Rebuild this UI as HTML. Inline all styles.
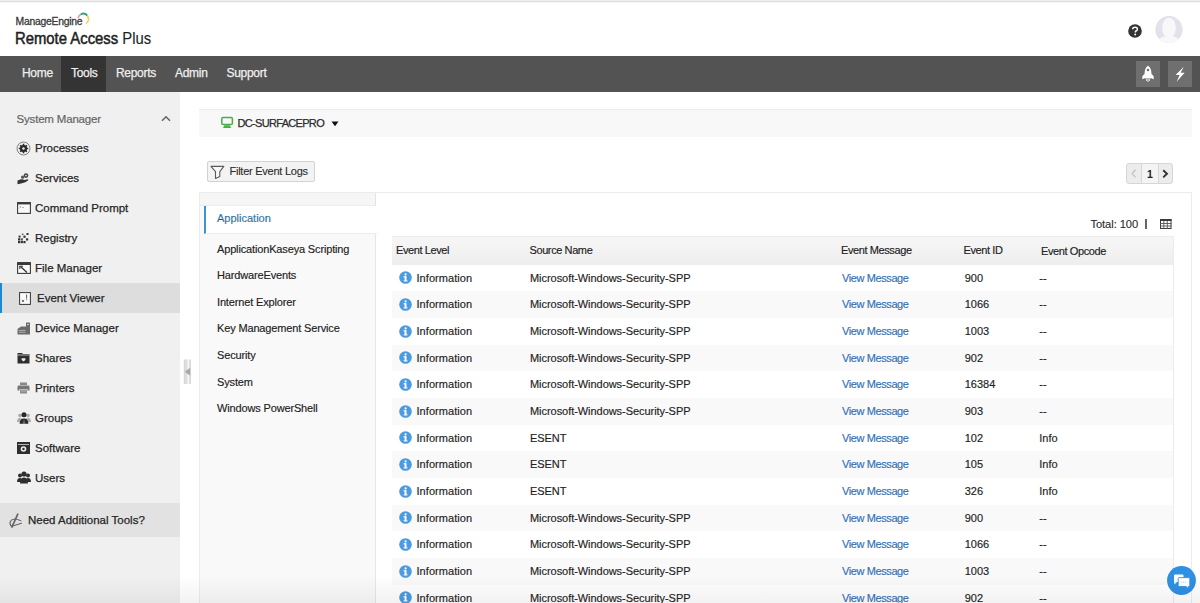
<!DOCTYPE html>
<html><head><meta charset="utf-8">
<style>
*{margin:0;padding:0;box-sizing:border-box}
html,body{width:1200px;height:603px;overflow:hidden;background:#fff;font-family:"Liberation Sans",sans-serif;color:#333}
.abs{position:absolute}
svg{position:absolute;display:block}
#topline{left:0;top:0;width:1200px;height:3px;background:linear-gradient(#ededed 0,#ededed 1px,#dcdcdc 1px,#dcdcdc 2px,#f8f8f8 2px)}
#nav{left:0;top:56px;width:1200px;height:36px;background:#535353}
.nv{position:absolute;top:0;height:36px;line-height:35px;font-size:12px;color:#f0f0f0;letter-spacing:-0.3px;-webkit-text-stroke:0.25px #eee}
#side{left:0;top:92px;width:180px;height:511px;background:#f0f0f0}
.si{position:absolute;left:35px;font-size:11.5px;color:#262626;white-space:nowrap;line-height:14px;-webkit-text-stroke:0.25px #262626}
.lt{position:absolute;left:217px;font-size:11px;color:#222;white-space:nowrap;line-height:14px;letter-spacing:-0.15px;-webkit-text-stroke:0.15px #222}
.row{position:absolute;left:392px;width:781px;height:26.67px}
.cell{position:absolute;font-size:11px;color:#222;white-space:nowrap;line-height:14px;top:6px;-webkit-text-stroke:0.15px #222}
.hd{position:absolute;font-size:11px;color:#222;-webkit-text-stroke:0.15px #222;white-space:nowrap;line-height:14px;top:242.7px;letter-spacing:-0.4px}
.link{color:#3170b6;-webkit-text-stroke:0.15px #3170b6;letter-spacing:-0.4px}
.info{left:6.9px;top:6.8px}
</style></head><body>
<div id="topline" class="abs"></div>
<!-- header -->
<div class="abs" style="left:15.5px;top:14.5px;font-size:10.4px;color:#3a3a3a;letter-spacing:-0.26px;-webkit-text-stroke:0.3px #3a3a3a;white-space:nowrap;line-height:13px">ManageEngine</div>
<svg style="left:72px;top:8px" width="24" height="20" viewBox="0 0 24 20"><g fill="none" stroke-width="1.8"><path d="M6.08 10.08 A5.3 5.3 0 0 1 8.65 6.41" stroke="#e8a0a8"/><path d="M8.65 6.41 A5.3 5.3 0 0 1 15.36 7.59" stroke="#3c9c88"/><path d="M15.36 7.59 A5.3 5.3 0 0 1 13.95 15.59" stroke="#ecd468"/></g></svg>
<div class="abs" style="left:14.5px;top:28.5px;font-size:16.5px;color:#222;white-space:nowrap;line-height:19px;-webkit-text-stroke:0.5px #222;transform:scaleX(0.9);transform-origin:0 0">Remote Access <span style="-webkit-text-stroke:0.1px #222">Plus</span></div>
<svg style="left:1128px;top:24px" width="14" height="14" viewBox="0 0 14 14"><circle cx="7" cy="7" r="6.8" fill="#333"/><path d="M4.6 5.3 Q4.7 3.2 7 3.2 Q9.4 3.2 9.4 5.2 Q9.4 6.4 8 7 Q7.3 7.4 7.3 8.4" stroke="#fff" stroke-width="1.5" fill="none"/><circle cx="7.2" cy="10.5" r="0.95" fill="#fff"/></svg>
<svg style="left:1155px;top:16px" width="28" height="28" viewBox="0 0 28 28"><defs><clipPath id="cc"><circle cx="14" cy="13.5" r="13.6"/></clipPath></defs><circle cx="14" cy="13.5" r="13.6" fill="#e2e2ea"/><g clip-path="url(#cc)" fill="#f8f8fb"><ellipse cx="14" cy="12" rx="6.8" ry="10.2"/><path d="M3 28 Q3.5 21.5 9.5 20.5 L18.5 20.5 Q24.5 21.5 25 28 Z"/><rect x="10" y="17" width="8" height="5"/></g></svg>
<!-- nav -->
<div id="nav" class="abs">
  <div class="nv" style="left:22px">Home</div>
  <div class="abs" style="left:61px;top:0;width:45px;height:36px;background:#343434"></div>
  <div class="nv" style="left:71px">Tools</div>
  <div class="nv" style="left:116px">Reports</div>
  <div class="nv" style="left:175px">Admin</div>
  <div class="nv" style="left:226.5px">Support</div>
  <div class="abs" style="left:1136px;top:5px;width:24px;height:26px;background:#6f6f6f"></div>
  <div class="abs" style="left:1168px;top:5px;width:24px;height:26px;background:#6f6f6f"></div>
</div>
<svg style="left:1136px;top:61px" width="24" height="26" viewBox="0 0 24 26"><path d="M12 4.8 Q15.4 7 15.4 12 L15.2 17.5 L8.8 17.5 L8.6 12 Q8.6 7 12 4.8 Z" fill="#fff"/><path d="M8.8 12.5 Q6.2 14.5 6.2 17 L6.5 18.3 L9 17 Z M15.2 12.5 Q17.8 14.5 17.8 17 L17.5 18.3 L15 17 Z" fill="#fff"/><circle cx="12" cy="9" r="1.25" fill="#6f6f6f"/><rect x="10.1" y="18" width="1" height="2" fill="#ddd"/><rect x="12.9" y="18" width="1" height="2" fill="#ddd"/><rect x="11.5" y="18" width="1" height="3" fill="#eee"/></svg>
<svg style="left:1168px;top:61px" width="24" height="26" viewBox="0 0 24 26"><path d="M15.8 5.8 L7.6 14 H11.6 L8.6 20.8 L16.6 11.8 H12.6 Z" fill="#fff"/></svg>
<!-- sidebar -->
<div id="side" class="abs">
  <div class="abs" style="left:16.5px;top:19.5px;font-size:11.5px;color:#666;letter-spacing:-0.18px;white-space:nowrap;line-height:14px;-webkit-text-stroke:0.2px #666">System Manager</div>
  <div class="abs" style="top:191px;left:0;width:180px;height:30px;background:#dddddd"></div>
  <div class="abs" style="top:191px;left:0;width:2px;height:30px;background:#1c8ad0"></div>
  <div class="si" style="top:49px">Processes</div>
  <div class="si" style="top:79px">Services</div>
  <div class="si" style="top:109px">Command Prompt</div>
  <div class="si" style="top:139px">Registry</div>
  <div class="si" style="top:169px">File Manager</div>
  <div class="si" style="top:199px;left:37px">Event Viewer</div>
  <div class="si" style="top:229px">Device Manager</div>
  <div class="si" style="top:259px">Shares</div>
  <div class="si" style="top:289px">Printers</div>
  <div class="si" style="top:319px">Groups</div>
  <div class="si" style="top:349px">Software</div>
  <div class="si" style="top:379px">Users</div>
  <div class="abs" style="top:410.5px;left:0;width:180px;height:34.5px;background:#e2e2e2"></div>
  <div class="si" style="top:421px;left:28px">Need Additional Tools?</div>
</div>
<svg style="left:161px;top:115px" width="10" height="7" viewBox="0 0 10 7"><path d="M1 5.8 L5 1.8 L9 5.8" stroke="#666" stroke-width="1.6" fill="none"/></svg>
<!-- sidebar icons -->
<svg style="left:16px;top:141px" width="15" height="15" viewBox="0 0 15 15"><circle cx="7.5" cy="7.5" r="6.5" stroke="#777" stroke-width="0.9" fill="none"/><circle cx="7.5" cy="7.5" r="3.6" fill="#2a2a2a"/><g stroke="#2a2a2a" stroke-width="1.6"><path d="M7.5 2.8 V12.2 M2.8 7.5 H12.2 M4.2 4.2 L10.8 10.8 M10.8 4.2 L4.2 10.8"/></g><circle cx="7.5" cy="7.5" r="1.2" fill="#f0f0f0"/></svg>
<svg style="left:17px;top:172px" width="13" height="13" viewBox="0 0 13 13"><path d="M0.5 8.5 L4 7.3 Q6 7 7.5 8 L10.5 7.2 Q12 7.5 11 8.6 Q8.5 10.8 5 11.3 L0.5 12.2 Z" fill="#333"/><circle cx="9" cy="3.6" r="2.3" fill="#444"/><circle cx="5.6" cy="5.2" r="1.6" fill="#555"/><circle cx="9" cy="3.6" r="0.8" fill="#f0f0f0"/></svg>
<svg style="left:16.5px;top:202px" width="14" height="12" viewBox="0 0 14 12"><rect x="0.6" y="0.6" width="12.8" height="10.8" fill="#fafafa" stroke="#3a3a3a" stroke-width="1.1"/><rect x="0.6" y="0.6" width="12.8" height="1.8" fill="#3a3a3a"/><path d="M2.5 4 L4 5 L2.5 6 M5 5.5 H7" stroke="#888" stroke-width="0.6" fill="none"/></svg>
<svg style="left:18px;top:233px" width="11" height="11" viewBox="0 0 11 11"><g fill="#333"><rect x="0" y="8" width="2.2" height="2.2"/><rect x="2.7" y="8" width="2.2" height="2.2"/><rect x="5.4" y="8" width="2.2" height="2.2"/><rect x="0" y="5.3" width="2.2" height="2.2"/><rect x="2.7" y="5.3" width="2.2" height="2.2" fill="#555"/><rect x="8" y="5.3" width="2.2" height="2.2"/><rect x="0.6" y="2.6" width="2" height="2"/><rect x="5.4" y="2.6" width="2.2" height="2.2"/><rect x="8.5" y="0" width="2" height="2"/><rect x="3.8" y="0.5" width="1.6" height="1.6" fill="#666"/></g></svg>
<svg style="left:16.5px;top:262px" width="14" height="12" viewBox="0 0 14 12"><rect x="0.6" y="0.6" width="12.8" height="10.8" fill="#fafafa" stroke="#3a3a3a" stroke-width="1.1"/><rect x="0.6" y="0.6" width="12.8" height="2.4" fill="#3a3a3a"/><path d="M3.5 4.5 L10 10.5" stroke="#333" stroke-width="1.3"/><path d="M2.5 4.2 H6 M2.8 4 V7" stroke="#333" stroke-width="1"/></svg>
<svg style="left:19px;top:292px" width="12" height="13" viewBox="0 0 12 13"><rect x="0.6" y="0.6" width="10.8" height="11.8" fill="#fafafa" stroke="#333" stroke-width="1"/><path d="M3 7.8 L5 10 M5 7.8 L3 10" stroke="#333" stroke-width="0.7"/><path d="M7.6 2.5 V6.5 M7.6 7.3 V8.2" stroke="#333" stroke-width="0.8"/></svg>
<svg style="left:17px;top:322px" width="14" height="13" viewBox="0 0 14 13"><path d="M9 0.5 H13 V12.5 H0.5 V7 L4 4.5 H9 Z" fill="#6a6a6a"/><path d="M1.5 8.5 H8.5 M2 10.3 H8.5" stroke="#ddd" stroke-width="0.6"/><circle cx="11" cy="2.5" r="0.8" fill="#ddd"/></svg>
<svg style="left:17px;top:352px" width="13" height="12" viewBox="0 0 13 12"><path d="M0.5 1 H5 L6 2 H12.5 V11.5 H0.5 Z" fill="#2e2e2e"/><path d="M0.5 3 H12.5" stroke="#f0f0f0" stroke-width="0.7"/><path d="M4.6 6.2 H8.4 V8 L6.5 9.6 L4.6 8 Z" fill="#e8e8e8"/></svg>
<svg style="left:17px;top:382px" width="13" height="12" viewBox="0 0 13 12"><path d="M3 0.5 H10 V3 H3 Z" fill="#888"/><path d="M1.5 3.5 Q0.5 3.5 0.5 5 V8.5 H2.5 V7 H10.5 V8.5 H12.5 V5 Q12.5 3.5 11.5 3.5 Z" fill="#777"/><rect x="3" y="7.5" width="7" height="4" fill="#8a8a8a"/><path d="M3.5 9 H9.5" stroke="#ddd" stroke-width="0.5"/></svg>
<svg style="left:16.5px;top:412px" width="14" height="12" viewBox="0 0 14 12"><g fill="#aaa"><circle cx="3" cy="3.5" r="1.8"/><circle cx="11" cy="3.5" r="1.8"/><path d="M0 9 Q0.5 6 3 6 Q5 6 5.5 8 L4 10 H0 Z"/><path d="M14 9 Q13.5 6 11 6 Q9 6 8.5 8 L10 10 H14 Z"/></g><circle cx="7" cy="2.8" r="2.5" fill="#2a2a2a"/><path d="M2.5 11.8 Q3 6.5 7 6.5 Q11 6.5 11.5 11.8 Z" fill="#2a2a2a"/><path d="M7 7 L6.3 11.8 H7.7 Z" fill="#aaa"/></svg>
<svg style="left:17px;top:442px" width="13" height="12" viewBox="0 0 13 12"><rect x="0" y="0" width="13" height="12" fill="#2e2e2e"/><rect x="1" y="2.2" width="11" height="0.7" fill="#f0f0f0"/><circle cx="6.5" cy="7" r="2.8" fill="#eee"/><circle cx="6.5" cy="7" r="1.2" fill="#2e2e2e"/></svg>
<svg style="left:16.5px;top:471px" width="14" height="13" viewBox="0 0 14 13"><g fill="#2e2e2e"><circle cx="3" cy="4.5" r="2"/><circle cx="11" cy="4.5" r="2"/><path d="M0 11 Q0 7 3 7 Q5 7 5.5 9 V11 Z"/><path d="M14 11 Q14 7 11 7 Q9 7 8.5 9 V11 Z"/><circle cx="7" cy="3" r="2.6"/><path d="M3 12.5 Q3 6.5 7 6.5 Q11 6.5 11 12.5 Z"/></g></svg>
<svg style="left:4px;top:508px" width="24" height="26" viewBox="0 0 24 26"><g fill="none" stroke="#666" stroke-linecap="round"><path d="M13.8 6.2 L8 18.8" stroke-width="1.7"/><path d="M8 19 Q5.2 16.5 6.3 13.5 Q7.5 11 10.5 11.3" stroke-width="1.1"/><path d="M11 10.6 L17 12.8" stroke-width="1"/><path d="M7.8 18.2 L17.5 15.2" stroke-width="1.1"/></g></svg>
<!-- collapse handle -->
<svg style="left:183px;top:359px" width="9" height="26" viewBox="0 0 9 26"><rect x="1" y="0.5" width="3.6" height="24.5" fill="#dcdcdc"/><rect x="5.8" y="0.5" width="2.3" height="24.5" fill="#dcdcdc"/><path d="M1.2 0.5 V25" stroke="#cfcfcf" stroke-width="0.6"/><path d="M7.2 8.8 L1.8 12.8 L7.2 16.8 Z" fill="#a8a8a8"/></svg>
<!-- device bar -->
<div class="abs" style="left:199px;top:109px;width:993px;height:27.5px;background:#f8f8f8;border-top:1px solid #ececec"></div>
<svg style="left:220px;top:116px" width="14" height="13" viewBox="0 0 14 13"><rect x="1.8" y="1.6" width="10.6" height="7" rx="1.3" fill="none" stroke="#47ad47" stroke-width="1.5"/><path d="M4.5 9.3 H9.7 L11.3 12 H2.9 Z" fill="#47b447"/></svg>
<div class="abs" style="left:237.5px;top:116px;font-size:11px;color:#2a2a2a;letter-spacing:-0.68px;white-space:nowrap;line-height:14px;-webkit-text-stroke:0.25px #2a2a2a">DC-SURFACEPRO</div>
<svg style="left:330.5px;top:120.5px" width="8" height="6" viewBox="0 0 8 6"><path d="M0.5 0.5 H7.5 L4 5.2 Z" fill="#111"/></svg>
<!-- filter button -->
<div class="abs" style="left:207px;top:161.3px;width:107.5px;height:20.5px;background:#f3f3f3;border:1px solid #d2d2d2;border-radius:2px"></div>
<svg style="left:206px;top:160px" width="24" height="24" viewBox="0 0 24 24"><path d="M5 6.4 H17.8 L13.8 11.6 V16.4 L9.5 18.4 V11.6 Z" fill="#f8f8f8" stroke="#5a5a5a" stroke-width="1.1" stroke-linejoin="round"/></svg>
<div class="abs" style="left:229.5px;top:164.3px;font-size:11px;color:#2a2a2a;letter-spacing:-0.25px;white-space:nowrap;line-height:14px;-webkit-text-stroke:0.1px #2a2a2a">Filter Event Logs</div>
<!-- pagination -->
<div class="abs" style="left:1126px;top:163px;width:47px;height:21px;background:#ececec;border:1px solid #d6d6d6;border-radius:3px"></div>
<div class="abs" style="left:1140.5px;top:164px;width:1px;height:19px;background:#d8d8d8"></div>
<div class="abs" style="left:1141.5px;top:164px;width:16.5px;height:19px;background:#f4f4f4"></div>
<div class="abs" style="left:1158px;top:164px;width:1px;height:19px;background:#d8d8d8"></div>
<svg style="left:1130px;top:168px" width="8" height="11" viewBox="0 0 8 11"><path d="M5.5 1.8 L2.2 5.6 L5.5 9.4" stroke="#c4c4c4" stroke-width="1.4" fill="none"/></svg>
<div class="abs" style="left:1147px;top:167px;font-size:10.5px;color:#222;white-space:nowrap;line-height:14px;font-weight:bold">1</div>
<svg style="left:1161px;top:168px" width="9" height="11" viewBox="0 0 9 11"><path d="M2.2 2.2 L6 5.8 L2.2 9.4" stroke="#333" stroke-width="1.9" fill="none"/></svg>
<!-- panel -->
<div class="abs" style="left:199px;top:192px;width:993px;height:430px;border:1px solid #ececec;background:#fff"></div>
<div class="abs" style="left:200px;top:193px;width:176px;height:430px;background:#f9f9f9;border-right:1px solid #e6e6e6"></div>
<div class="abs" style="left:200px;top:193px;width:176px;height:13px;background:#f6f6f6;border-bottom:1px solid #ededed;border-right:1px solid #e4e4e4"></div>
<div class="abs" style="left:204px;top:206px;width:173px;height:28px;background:#fff;border-left:2px solid #3b94d0;border-bottom:1px solid #ededed"></div>
<div class="lt" style="top:211.2px;color:#3187c2;letter-spacing:0">Application</div>
<div class="lt" style="top:241.7px">ApplicationKaseya Scripting</div>
<div class="lt" style="top:268.2px">HardwareEvents</div>
<div class="lt" style="top:294.7px">Internet Explorer</div>
<div class="lt" style="top:321.2px">Key Management Service</div>
<div class="lt" style="top:348.2px">Security</div>
<div class="lt" style="top:374.7px">System</div>
<div class="lt" style="top:401.2px">Windows PowerShell</div>
<div class="abs" style="left:1090.5px;top:216.5px;font-size:11.2px;color:#2a2a2a;letter-spacing:-0.1px;white-space:nowrap;line-height:14px;-webkit-text-stroke:0.1px #2a2a2a">Total: 100</div>
<div class="abs" style="left:1145.2px;top:219.3px;width:1.5px;height:9.8px;background:#666"></div>
<svg style="left:1160px;top:219px" width="12" height="10" viewBox="0 0 12 10"><rect x="0.5" y="0.5" width="10.5" height="9" fill="#fff" stroke="#3a3a3a" stroke-width="1"/><rect x="0" y="0" width="11.5" height="2" fill="#3a3a3a"/><path d="M0 4.5 H11.5 M0 7 H11.5 M3.8 2 V10 M7.3 2 V10" stroke="#555" stroke-width="0.9"/></svg>
<!-- table -->
<div class="abs" style="left:392px;top:235.5px;width:781.5px;height:29px;background:linear-gradient(#f6f6f6,#eeeeee);border-top:1px solid #ececec"></div>
<div class="abs" style="left:1173px;top:235.5px;width:1px;height:380px;background:#ececec"></div>
<div class="hd" style="left:396px">Event Level</div>
<div class="hd" style="left:529.5px">Source Name</div>
<div class="hd" style="left:841px">Event Message</div>
<div class="hd" style="left:963.5px">Event ID</div>
<div class="hd" style="left:1041px;top:244px">Event Opcode</div>
<div class="row" style="top:264.50px;background:#fff"><svg class="info" width="13" height="13" viewBox="0 0 13 13"><circle cx="6.5" cy="6.5" r="6.3" fill="#4b9be0"/><rect x="5.6" y="5.2" width="1.9" height="5" fill="#fff"/><rect x="4.6" y="5.2" width="2" height="1.2" fill="#fff"/><rect x="4.6" y="9.4" width="3.9" height="1" fill="#fff"/><circle cx="6.6" cy="3.4" r="1.05" fill="#fff"/></svg><div class="cell" style="left:24.5px;letter-spacing:0.05px">Information</div><div class="cell" style="left:138px;letter-spacing:-0.05px">Microsoft-Windows-Security-SPP</div><div class="cell link" style="left:450px">View Message</div><div class="cell" style="left:572.7px">900</div><div class="cell" style="left:647.3px">--</div></div>
<div class="row" style="top:291.17px;background:#f9f9f9"><svg class="info" width="13" height="13" viewBox="0 0 13 13"><circle cx="6.5" cy="6.5" r="6.3" fill="#4b9be0"/><rect x="5.6" y="5.2" width="1.9" height="5" fill="#fff"/><rect x="4.6" y="5.2" width="2" height="1.2" fill="#fff"/><rect x="4.6" y="9.4" width="3.9" height="1" fill="#fff"/><circle cx="6.6" cy="3.4" r="1.05" fill="#fff"/></svg><div class="cell" style="left:24.5px;letter-spacing:0.05px">Information</div><div class="cell" style="left:138px;letter-spacing:-0.05px">Microsoft-Windows-Security-SPP</div><div class="cell link" style="left:450px">View Message</div><div class="cell" style="left:572.7px">1066</div><div class="cell" style="left:647.3px">--</div></div>
<div class="row" style="top:317.84px;background:#fff"><svg class="info" width="13" height="13" viewBox="0 0 13 13"><circle cx="6.5" cy="6.5" r="6.3" fill="#4b9be0"/><rect x="5.6" y="5.2" width="1.9" height="5" fill="#fff"/><rect x="4.6" y="5.2" width="2" height="1.2" fill="#fff"/><rect x="4.6" y="9.4" width="3.9" height="1" fill="#fff"/><circle cx="6.6" cy="3.4" r="1.05" fill="#fff"/></svg><div class="cell" style="left:24.5px;letter-spacing:0.05px">Information</div><div class="cell" style="left:138px;letter-spacing:-0.05px">Microsoft-Windows-Security-SPP</div><div class="cell link" style="left:450px">View Message</div><div class="cell" style="left:572.7px">1003</div><div class="cell" style="left:647.3px">--</div></div>
<div class="row" style="top:344.51px;background:#f9f9f9"><svg class="info" width="13" height="13" viewBox="0 0 13 13"><circle cx="6.5" cy="6.5" r="6.3" fill="#4b9be0"/><rect x="5.6" y="5.2" width="1.9" height="5" fill="#fff"/><rect x="4.6" y="5.2" width="2" height="1.2" fill="#fff"/><rect x="4.6" y="9.4" width="3.9" height="1" fill="#fff"/><circle cx="6.6" cy="3.4" r="1.05" fill="#fff"/></svg><div class="cell" style="left:24.5px;letter-spacing:0.05px">Information</div><div class="cell" style="left:138px;letter-spacing:-0.05px">Microsoft-Windows-Security-SPP</div><div class="cell link" style="left:450px">View Message</div><div class="cell" style="left:572.7px">902</div><div class="cell" style="left:647.3px">--</div></div>
<div class="row" style="top:371.18px;background:#fff"><svg class="info" width="13" height="13" viewBox="0 0 13 13"><circle cx="6.5" cy="6.5" r="6.3" fill="#4b9be0"/><rect x="5.6" y="5.2" width="1.9" height="5" fill="#fff"/><rect x="4.6" y="5.2" width="2" height="1.2" fill="#fff"/><rect x="4.6" y="9.4" width="3.9" height="1" fill="#fff"/><circle cx="6.6" cy="3.4" r="1.05" fill="#fff"/></svg><div class="cell" style="left:24.5px;letter-spacing:0.05px">Information</div><div class="cell" style="left:138px;letter-spacing:-0.05px">Microsoft-Windows-Security-SPP</div><div class="cell link" style="left:450px">View Message</div><div class="cell" style="left:572.7px">16384</div><div class="cell" style="left:647.3px">--</div></div>
<div class="row" style="top:397.85px;background:#f9f9f9"><svg class="info" width="13" height="13" viewBox="0 0 13 13"><circle cx="6.5" cy="6.5" r="6.3" fill="#4b9be0"/><rect x="5.6" y="5.2" width="1.9" height="5" fill="#fff"/><rect x="4.6" y="5.2" width="2" height="1.2" fill="#fff"/><rect x="4.6" y="9.4" width="3.9" height="1" fill="#fff"/><circle cx="6.6" cy="3.4" r="1.05" fill="#fff"/></svg><div class="cell" style="left:24.5px;letter-spacing:0.05px">Information</div><div class="cell" style="left:138px;letter-spacing:-0.05px">Microsoft-Windows-Security-SPP</div><div class="cell link" style="left:450px">View Message</div><div class="cell" style="left:572.7px">903</div><div class="cell" style="left:647.3px">--</div></div>
<div class="row" style="top:424.52px;background:#fff"><svg class="info" width="13" height="13" viewBox="0 0 13 13"><circle cx="6.5" cy="6.5" r="6.3" fill="#4b9be0"/><rect x="5.6" y="5.2" width="1.9" height="5" fill="#fff"/><rect x="4.6" y="5.2" width="2" height="1.2" fill="#fff"/><rect x="4.6" y="9.4" width="3.9" height="1" fill="#fff"/><circle cx="6.6" cy="3.4" r="1.05" fill="#fff"/></svg><div class="cell" style="left:24.5px;letter-spacing:0.05px">Information</div><div class="cell" style="left:138px;letter-spacing:-0.05px">ESENT</div><div class="cell link" style="left:450px">View Message</div><div class="cell" style="left:572.7px">102</div><div class="cell" style="left:647.3px">Info</div></div>
<div class="row" style="top:451.19px;background:#f9f9f9"><svg class="info" width="13" height="13" viewBox="0 0 13 13"><circle cx="6.5" cy="6.5" r="6.3" fill="#4b9be0"/><rect x="5.6" y="5.2" width="1.9" height="5" fill="#fff"/><rect x="4.6" y="5.2" width="2" height="1.2" fill="#fff"/><rect x="4.6" y="9.4" width="3.9" height="1" fill="#fff"/><circle cx="6.6" cy="3.4" r="1.05" fill="#fff"/></svg><div class="cell" style="left:24.5px;letter-spacing:0.05px">Information</div><div class="cell" style="left:138px;letter-spacing:-0.05px">ESENT</div><div class="cell link" style="left:450px">View Message</div><div class="cell" style="left:572.7px">105</div><div class="cell" style="left:647.3px">Info</div></div>
<div class="row" style="top:477.86px;background:#fff"><svg class="info" width="13" height="13" viewBox="0 0 13 13"><circle cx="6.5" cy="6.5" r="6.3" fill="#4b9be0"/><rect x="5.6" y="5.2" width="1.9" height="5" fill="#fff"/><rect x="4.6" y="5.2" width="2" height="1.2" fill="#fff"/><rect x="4.6" y="9.4" width="3.9" height="1" fill="#fff"/><circle cx="6.6" cy="3.4" r="1.05" fill="#fff"/></svg><div class="cell" style="left:24.5px;letter-spacing:0.05px">Information</div><div class="cell" style="left:138px;letter-spacing:-0.05px">ESENT</div><div class="cell link" style="left:450px">View Message</div><div class="cell" style="left:572.7px">326</div><div class="cell" style="left:647.3px">Info</div></div>
<div class="row" style="top:504.53px;background:#f9f9f9"><svg class="info" width="13" height="13" viewBox="0 0 13 13"><circle cx="6.5" cy="6.5" r="6.3" fill="#4b9be0"/><rect x="5.6" y="5.2" width="1.9" height="5" fill="#fff"/><rect x="4.6" y="5.2" width="2" height="1.2" fill="#fff"/><rect x="4.6" y="9.4" width="3.9" height="1" fill="#fff"/><circle cx="6.6" cy="3.4" r="1.05" fill="#fff"/></svg><div class="cell" style="left:24.5px;letter-spacing:0.05px">Information</div><div class="cell" style="left:138px;letter-spacing:-0.05px">Microsoft-Windows-Security-SPP</div><div class="cell link" style="left:450px">View Message</div><div class="cell" style="left:572.7px">900</div><div class="cell" style="left:647.3px">--</div></div>
<div class="row" style="top:531.20px;background:#fff"><svg class="info" width="13" height="13" viewBox="0 0 13 13"><circle cx="6.5" cy="6.5" r="6.3" fill="#4b9be0"/><rect x="5.6" y="5.2" width="1.9" height="5" fill="#fff"/><rect x="4.6" y="5.2" width="2" height="1.2" fill="#fff"/><rect x="4.6" y="9.4" width="3.9" height="1" fill="#fff"/><circle cx="6.6" cy="3.4" r="1.05" fill="#fff"/></svg><div class="cell" style="left:24.5px;letter-spacing:0.05px">Information</div><div class="cell" style="left:138px;letter-spacing:-0.05px">Microsoft-Windows-Security-SPP</div><div class="cell link" style="left:450px">View Message</div><div class="cell" style="left:572.7px">1066</div><div class="cell" style="left:647.3px">--</div></div>
<div class="row" style="top:557.87px;background:#f9f9f9"><svg class="info" width="13" height="13" viewBox="0 0 13 13"><circle cx="6.5" cy="6.5" r="6.3" fill="#4b9be0"/><rect x="5.6" y="5.2" width="1.9" height="5" fill="#fff"/><rect x="4.6" y="5.2" width="2" height="1.2" fill="#fff"/><rect x="4.6" y="9.4" width="3.9" height="1" fill="#fff"/><circle cx="6.6" cy="3.4" r="1.05" fill="#fff"/></svg><div class="cell" style="left:24.5px;letter-spacing:0.05px">Information</div><div class="cell" style="left:138px;letter-spacing:-0.05px">Microsoft-Windows-Security-SPP</div><div class="cell link" style="left:450px">View Message</div><div class="cell" style="left:572.7px">1003</div><div class="cell" style="left:647.3px">--</div></div>
<div class="row" style="top:584.54px;background:#fff"><svg class="info" width="13" height="13" viewBox="0 0 13 13"><circle cx="6.5" cy="6.5" r="6.3" fill="#4b9be0"/><rect x="5.6" y="5.2" width="1.9" height="5" fill="#fff"/><rect x="4.6" y="5.2" width="2" height="1.2" fill="#fff"/><rect x="4.6" y="9.4" width="3.9" height="1" fill="#fff"/><circle cx="6.6" cy="3.4" r="1.05" fill="#fff"/></svg><div class="cell" style="left:24.5px;letter-spacing:0.05px">Information</div><div class="cell" style="left:138px;letter-spacing:-0.05px">Microsoft-Windows-Security-SPP</div><div class="cell link" style="left:450px">View Message</div><div class="cell" style="left:572.7px">902</div><div class="cell" style="left:647.3px">--</div></div>
<!-- chat -->
<svg style="left:1167px;top:566px" width="29" height="29" viewBox="0 0 29 29"><circle cx="14.5" cy="14.5" r="14.4" fill="#2f8fe2"/><path d="M7 9.5 Q7 8.5 8 8.5 H15.5 Q16.5 8.5 16.5 9.5 V15 Q16.5 16 15.5 16 H10 L7.3 18.5 V16 Q7 16 7 15 Z" fill="#fff"/><path d="M11.2 12.5 Q11.2 11.6 12.2 11.6 H21.8 Q22.8 11.6 22.8 12.6 V19.5 Q22.8 20.5 21.8 20.5 H21.2 V22.5 L19 20.5 H12.2 Q11.2 20.5 11.2 19.5 Z" fill="#fff" stroke="#2f8fe2" stroke-width="0.9"/><path d="M14 16.2 H20" stroke="#a6ccf0" stroke-width="0.8" stroke-dasharray="1.2 0.8"/></svg>
<!-- bottom shade -->
<div class="abs" style="left:0;top:575px;width:1200px;height:28px;background:linear-gradient(rgba(0,0,0,0),rgba(0,0,0,0.05))"></div>
</body></html>
